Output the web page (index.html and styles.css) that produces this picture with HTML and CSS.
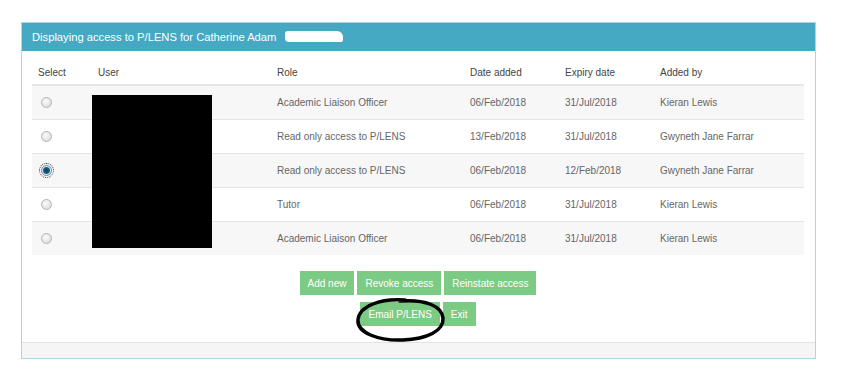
FILE: index.html
```html
<!DOCTYPE html>
<html lang="en">
<head>
  <meta charset="UTF-8">
  <title>P/LENS access</title>
  <link rel="stylesheet" href="styles.css">
</head>
<body>

  <div class="panel">
    <div class="panel-heading">
      Displaying access to P/LENS for Catherine Adam <span class="blot"></span>
    </div>

    <div class="panel-body">
      <table class="access-table">
        <thead>
          <tr>
            <th class="col-select">Select</th>
            <th class="col-user">User</th>
            <th class="col-role">Role</th>
            <th class="col-date">Date added</th>
            <th class="col-date">Expiry date</th>
            <th>Added by</th>
          </tr>
        </thead>
        <tbody>
          <tr>
            <td><input type="radio" name="access" class="radio"></td>
            <td></td>
            <td>Academic Liaison Officer</td>
            <td>06/Feb/2018</td>
            <td>31/Jul/2018</td>
            <td>Kieran Lewis</td>
          </tr>
          <tr>
            <td><input type="radio" name="access" class="radio"></td>
            <td></td>
            <td>Read only access to P/LENS</td>
            <td>13/Feb/2018</td>
            <td>31/Jul/2018</td>
            <td>Gwyneth Jane Farrar</td>
          </tr>
          <tr>
            <td><input type="radio" name="access" class="radio" checked></td>
            <td></td>
            <td>Read only access to P/LENS</td>
            <td>06/Feb/2018</td>
            <td>12/Feb/2018</td>
            <td>Gwyneth Jane Farrar</td>
          </tr>
          <tr>
            <td><input type="radio" name="access" class="radio"></td>
            <td></td>
            <td>Tutor</td>
            <td>06/Feb/2018</td>
            <td>31/Jul/2018</td>
            <td>Kieran Lewis</td>
          </tr>
          <tr>
            <td><input type="radio" name="access" class="radio"></td>
            <td></td>
            <td>Academic Liaison Officer</td>
            <td>06/Feb/2018</td>
            <td>31/Jul/2018</td>
            <td>Kieran Lewis</td>
          </tr>
        </tbody>
      </table>

      <!-- redacted user names -->
      <div class="redact"></div>

      <div class="actions">
        <div class="btn-row">
          <button type="button" class="btn">Add new</button>
          <button type="button" class="btn">Revoke access</button>
          <button type="button" class="btn">Reinstate access</button>
        </div>
        <div class="btn-row">
          <button type="button" class="btn">Email P/LENS</button>
          <button type="button" class="btn">Exit</button>
        </div>
      </div>

      <!-- hand drawn circle round the email button -->
      <svg class="scribble" width="96" height="50" viewBox="0 0 96 50">
        <path d="M52 5 C28 3 6 11 5 25 C4 38 26 46 50 45 C74 44 91 36 90 23 C89 11 72 4 47 6"
              fill="none" stroke="#000" stroke-width="3.5" stroke-linecap="round"/>
      </svg>
    </div>

    <div class="panel-footer"></div>
  </div>

</body>
</html>
```

FILE: styles.css
```css
body {
  margin: 0;
  padding: 22px 39px 0 21px;
  font-family: "Liberation Sans", Arial, sans-serif;
  color: #666;
  background: #fff;
}

.panel {
  width: 793px;
  border: 1px solid #a9d6e2;
}

.panel-heading {
  height: 28px;
  line-height: 28px;
  padding: 0 10px;
  background-color: #45a9c4;
  color: #fff;
  font-size: 11.2px;
}

/* white blot over the id number */
.blot {
  display: inline-block;
  width: 58px;
  height: 11px;
  margin-left: 5px;
  vertical-align: -1px;
  background: #fff;
  border-radius: 3px 6px 2px 4px;
}

.panel-body {
  position: relative;
  padding: 2px 11px 16px 10px;
}

.access-table {
  width: 772px;
  border-collapse: collapse;
  font-size: 10px;
}

.access-table th {
  height: 25px;
  text-align: left;
  vertical-align: bottom;
  font-weight: normal;
  color: #444;
  padding: 0 6px 6px;
  border-bottom: 2px solid #e6e6e6;
}

.access-table td {
  height: 33px;
  padding: 0 6px;
  border-top: 1px solid #e4e4e4;
  color: #666;
}

.access-table tbody tr:nth-child(odd) td {
  background-color: #f7f7f7;
}

.col-select { width: 48px; }
.col-user { width: 167px; }
.col-role { width: 181px; }
.col-date { width: 83px; }

.radio {
  appearance: none;
  width: 11px;
  height: 11px;
  margin: 0 0 0 3px;
  vertical-align: middle;
  border: 1px solid #b5b5b5;
  border-radius: 50%;
  background: radial-gradient(circle at 40% 35%, #fafafa, #d6d6d6);
}

.radio:checked {
  background: radial-gradient(circle, #0d3b5c 0, #1f5f86 3px, #dfe8ee 4px);
  border-color: #6d8ea6;
  outline: 1px dotted #333;
  outline-offset: 1px;
}

.redact {
  position: absolute;
  left: 70px;
  top: 44px;
  width: 120px;
  height: 153px;
  background: #000;
}

.actions {
  display: flex;
  flex-direction: column;
  align-items: center;
  gap: 7px;
  margin-top: 16px;
}

.btn-row {
  display: flex;
  gap: 3px;
}

.btn {
  height: 24px;
  padding: 0 8px;
  border: none;
  background-color: #7ccb84;
  color: #fff;
  font-family: "Liberation Sans", Arial, sans-serif;
  font-size: 10px;
  cursor: pointer;
}

.scribble {
  position: absolute;
  left: 331px;
  top: 244px;
}

.panel-footer {
  height: 15px;
  background-color: #f5f5f5;
  border-top: 1px solid #e2e2e2;
}
```
